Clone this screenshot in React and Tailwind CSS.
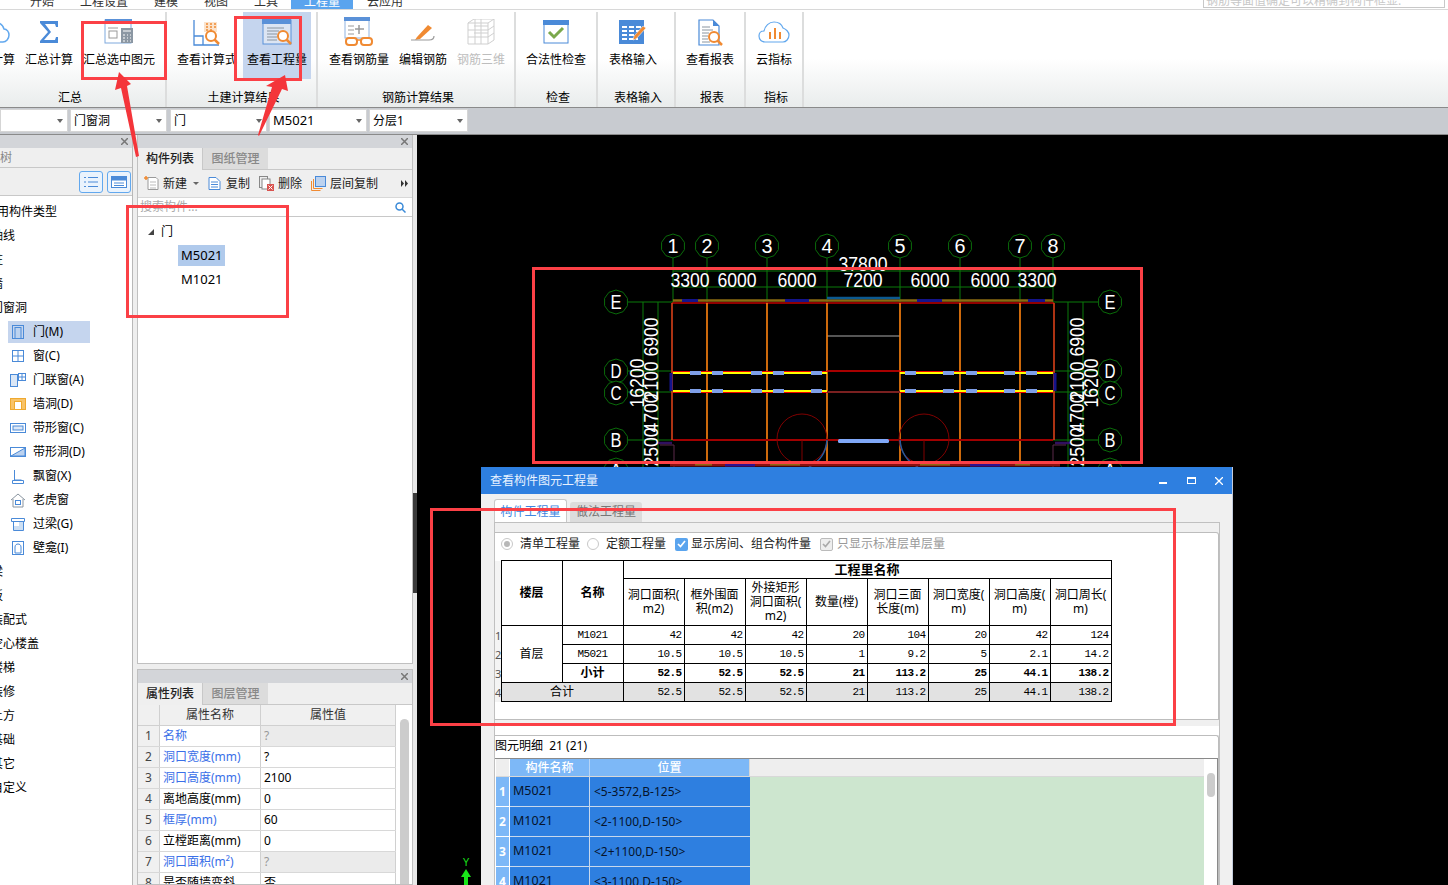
import React from "react";

const mono = "[font-family:'Liberation_Mono','Noto_Sans_CJK_SC',monospace]";

/* ---------- ribbon icons ---------- */
const B = "#4a8ad8";
const O = "#f08a32";
const Lens = ({ x, y, r = 5, c = O, w = 2 }) => (
  <g fill="none" stroke={c} strokeWidth={w}>
    <circle cx={x} cy={y} r={r} fill="#fff" />
    <path d={`M${x + r * 0.7} ${y + r * 0.7}l${r * 0.9} ${r * 0.9}`} strokeWidth={w + 0.5} />
  </g>
);
const IconCloudCalc = () => (
  <svg width="28" height="24" viewBox="0 0 28 24" fill="none" className="-ml-[14px]">
    <path d="M7 22c-4 0-6-3-6-6s2-5 5-6c1-5 5-8 9-7 4 0 6 3 7 6 3 0 5 3 5 6 0 4-3 7-6 7z" stroke="#62a8ee" strokeWidth="1.5" />
    <path d="M12 10h-5v7h5" stroke={O} strokeWidth="1.5" />
  </svg>
);
const IconSigma = () => (
  <svg width="20" height="22" viewBox="0 0 20 22"><path d="M1 0h18v6h-2l-1-3H6l6 8-7 8h11l1-3h2v6H1v-2l8-9-8-9z" fill={B} /></svg>
);
const IconSelCalc = () => (
  <svg width="30" height="26" viewBox="0 0 30 26" fill="none">
    <rect x="1" y="1" width="26" height="23" stroke="#7fa9dd" fill="#fff" />
    <rect x="1" y="0" width="27" height="4" fill="#5a91d8" />
    <rect x="5" y="12" width="8" height="7" stroke="#9a9a9a" />
    <path d="M4 9h10" stroke="#9a9a9a" />
    <rect x="17" y="9" width="12" height="15" fill="#8b97a3" />
    <path d="M19 12h8M19 16h2m2 0h1m2 0h1M19 19h2m2 0h1m2 0h1M19 22h2m2 0h1m2 0h1" stroke="#fff" />
  </svg>
);
const IconCalcView = () => (
  <svg width="28" height="27" viewBox="0 0 28 27" fill="none">
    <path d="M1 1v25h25" stroke={B} strokeWidth="1.3" />
    <path d="M1 17h9v9" stroke={B} strokeWidth="1.3" />
    <rect x="11" y="3" width="13" height="10" fill="#fbe3cc" />
    <path d="M13 5h2m2 0h2m2 0h2M13 8h2m2 0h2m2 0h2M13 11h2m2 0h2" stroke={O} strokeWidth="1.4" />
    <Lens x={18} y={17} r={5} />
  </svg>
);
const IconQty = () => (
  <svg width="30" height="27" viewBox="0 0 30 27" fill="none">
    <rect x="1" y="1" width="28" height="24" fill="#dce5f3" stroke="#5a91d8" />
    <rect x="0" y="0" width="29" height="5" fill="#5a91d8" />
    <path d="M5 9h17M5 12h12M5 15h10M5 18h10M5 21h10" stroke="#8a95a0" />
    <Lens x={21} y={17} r={5} />
  </svg>
);
const IconRebar = () => (
  <svg width="30" height="30" viewBox="0 0 30 30" fill="none">
    <rect x="1" y="1" width="24" height="20" fill="#fff" stroke="#8fb4e2" />
    <rect x="0" y="0" width="26" height="4" fill="#5a91d8" />
    <path d="M4 9h6M4 13h6M4 17h6" stroke="#9a9a9a" />
    <path d="M15 8v9M11 12h9" stroke="#9a9a9a" strokeWidth="1.5" />
    <rect x="2" y="21" width="11" height="7" rx="3" stroke={O} strokeWidth="2" fill="#fff" />
    <rect x="17" y="21" width="11" height="7" rx="3" stroke={O} strokeWidth="2" fill="#fff" />
    <path d="M13 23h4" stroke={O} strokeWidth="1.5" />
  </svg>
);
const IconEdit = () => (
  <svg width="28" height="20" viewBox="0 0 28 20" fill="none">
    <path d="M8 15L19 3l4 3-12 11-5 1z" fill={O} />
    <path d="M2 18h18c4 0 5-2 5-4" stroke="#9a9a9a" strokeWidth="1.2" />
  </svg>
);
const IconGrid3d = () => (
  <svg width="28" height="26" viewBox="0 0 28 26" fill="none" stroke="#cfcfcf">
    <path d="M1 4h20v21H1zM7 0h20v21M1 4l6-4M21 4l6-4M21 25l6-4M1 11h20l6-4M1 18h20l6-4M8 0v25M14 0v25M7 7h14M7 14h14" />
  </svg>
);
const IconCheck = () => (
  <svg width="26" height="24" viewBox="0 0 26 24" fill="none">
    <rect x="1" y="1" width="24" height="22" fill="#fff" stroke={B} />
    <rect x="0" y="0" width="26" height="5" fill={B} />
    <path d="M6 12l5 5 9-9" stroke="#7aa84c" strokeWidth="3" />
  </svg>
);
const IconTable = () => (
  <svg width="29" height="24" viewBox="0 0 29 24" fill="none">
    <rect x="0" y="0" width="25" height="24" fill={B} />
    <path d="M3 7h5m2 0h5m2 0h5M3 11h5m2 0h5m2 0h5M3 15h5m2 0h5m2 0h3M3 19h5m2 0h5m2 0h2" stroke="#fff" strokeWidth="2" />
    <path d="M17 19l10-11-3-2-9 10-1 4z" fill={O} stroke="#fff" strokeWidth="0.5" />
  </svg>
);
const IconReport = () => (
  <svg width="25" height="27" viewBox="0 0 25 27" fill="none">
    <path d="M1 1h14l6 6v19H1z" fill="#fff" stroke={B} strokeWidth="1.2" />
    <path d="M15 1v6h6z" fill={B} />
    <path d="M4 8h8M4 11h11M4 14h7M4 17h6M4 20h6M4 23h8" stroke="#8a95a0" />
    <Lens x={16} y={18} r={5} />
  </svg>
);
const IconCloudIdx = () => (
  <svg width="32" height="22" viewBox="0 0 32 22" fill="none">
    <path d="M7 21c-3 0-6-2-6-6 0-3 2-5 5-5 1-5 5-9 10-9s8 3 9 6c3 1 6 4 6 7 0 4-3 7-6 7z" stroke="#62a8ee" strokeWidth="1.2" fill="#fff" />
    <path d="M12 11v7M17 7v11M22 11v7" stroke={O} strokeWidth="2" />
  </svg>
);

/* ---------- tree icons ---------- */
const TI = ({ children }) => (
  <svg width="16" height="16" viewBox="0 0 16 16" fill="none" stroke="#4a8ad8" className="shrink-0">{children}</svg>
);
const treeIcons = {
  door: <TI><rect x="2.5" y="1.5" width="11" height="13" /><rect x="5" y="3.5" width="6" height="11" fill="#bcd2ef" /></TI>,
  win: <TI><rect x="2.5" y="2.5" width="11" height="11" /><path d="M8 3v10M3 8h10" /></TI>,
  combo: <TI><rect x="0.5" y="2.5" width="7" height="12" fill="#dbe7f6" /><rect x="8.5" y="1.5" width="7" height="7" /><path d="M12 2v6M9 5h6" /></TI>,
  hole: <TI><rect x="0.5" y="2.5" width="15" height="11" fill="#f8c368" stroke="#efa92f" /><rect x="4.5" y="5.5" width="7" height="8" fill="#fff" stroke="#efa92f" /></TI>,
  band: <TI><rect x="0.5" y="3.5" width="15" height="9" /><rect x="3" y="6" width="10" height="4" fill="#dbe7f6" /></TI>,
  bandh: <TI><rect x="0.5" y="3.5" width="15" height="9" /><path d="M1 12l14-8v8z" fill="#bcd2ef" /></TI>,
  bay: <TI><path d="M4.5 2v10.5M2.5 12.5h11v3h-11zM4.5 12h7" /></TI>,
  dorm: <TI><path d="M1 8l7-6 7 6M3 7v8h10V7" stroke="#8a95a0" /><rect x="5.5" y="8.5" width="5" height="4" /></TI>,
  lintel: <TI><path d="M1.5 2.5h13v3h-13zM3.5 6v8.5h10V6" /><path d="M4 14V10h5V6h4v8z" fill="#cddff3" stroke="none" /></TI>,
  niche: <TI><rect x="2.5" y="1.5" width="11" height="13" /><path d="M5 13V7c0-4 6-4 6 0v6z" /></TI>,
};

const TopRow = ({ children, wide }) => (
  <div className={`h-6 flex items-center text-[12px] text-black whitespace-nowrap ${wide ? "-ml-[15px]" : "-ml-[9px]"}`}>{children}</div>
);
const SubRow = ({ icon, label, active }) => (
  <div className={`flex items-center ml-2 w-[82px] pl-[2px] gap-[7px] text-[12px] text-black whitespace-nowrap ${active ? "bg-[#c5d5ee] h-[22px] my-px" : "h-6"}`}>
    {treeIcons[icon]}
    <span>{label}</span>
  </div>
);

const Btn = ({ icon, label, className = "", active, disabled }) => (
  <div className={`flex flex-col items-center h-[67px] pt-[3px] ${active ? "bg-[#c5d5ee]" : ""} ${className}`}>
    <div className="h-[34px] flex items-center justify-center">{icon}</div>
    <div className={`mt-[2px] h-[18px] leading-[18px] text-[12px] whitespace-nowrap ${disabled ? "text-[#bdbdbd]" : "text-black"}`}>{label}</div>
  </div>
);

const Group = ({ label, className = "", children }) => (
  <div className={`mt-[2px] h-[95px] flex flex-col border-r-2 border-[#dcdddd] shrink-0 relative ${className}`}>
    <div className="flex h-[77px]">{children}</div>
    <div className="h-[18px] leading-[18px] text-center text-[12px] text-black pl-[4px]">{label}</div>
  </div>
);

const Select = ({ className = "", children }) => (
  <div className={`h-[23px] bg-white border border-[#d5d5d5] flex items-center justify-between pl-[3px] pr-[4px] text-[12px] text-black shrink-0 ${className}`}>
    <span className="leading-none">{children}</span>
    <span className="w-0 h-0 border-l-[3px] border-r-[3px] border-t-[4px] border-l-transparent border-r-transparent border-t-[#666]" />
  </div>
);

const PanelTitle = () => (
  <div className="h-[13px] bg-[#d3d5d9] flex items-center justify-end pr-[4px]">
    <svg width="7" height="7" viewBox="0 0 7 7" stroke="#777" strokeWidth="1.5"><path d="M0 0l7 7M7 0L0 7" /></svg>
  </div>
);

const Tabs2 = ({ a, b }) => (
  <div className="h-[22px] bg-[#efefef] border-b border-[#c8c8c8] flex text-[12px] font-medium">
    <div className="w-[65px] h-[22px] flex items-center justify-center text-[#222] border-r border-[#c8c8c8] bg-[#efefef]">{a}</div>
    <div className="w-[65px] h-[21px] flex items-center justify-center text-[#888] bg-[#dcdcdc]">{b}</div>
  </div>
);

const props = [
  ["名称", "?", 1, 1],
  ["洞口宽度(mm)", "?", 1, 0],
  ["洞口高度(mm)", "2100", 1, 0],
  ["离地高度(mm)", "0", 0, 0],
  ["框厚(mm)", "60", 1, 0],
  ["立樘距离(mm)", "0", 0, 0],
  ["洞口面积(m²)", "?", 1, 1],
  ["是否随墙变斜", "否", 0, 0],
];

const headers = [
  <>洞口面积(<br />m2)</>,
  <>框外围面<br />积(m2)</>,
  <>外接矩形<br />洞口面积(<br />m2)</>,
  <>数量(樘)</>,
  <>洞口三面<br />长度(m)</>,
  <>洞口宽度(<br />m)</>,
  <>洞口高度(<br />m)</>,
  <>洞口周长(<br />m)</>,
];
const r1 = ["42", "42", "42", "20", "104", "20", "42", "124"];
const r2 = ["10.5", "10.5", "10.5", "1", "9.2", "5", "2.1", "14.2"];
const r3 = ["52.5", "52.5", "52.5", "21", "113.2", "25", "44.1", "138.2"];

const Num = ({ v, bold, gray }) => (
  <td className={`border border-black text-right pr-[2px] text-[11px] tracking-[-0.6px] ${mono} ${bold ? "font-bold" : ""} ${gray ? "bg-[#e2e2e2]" : ""}`}>{v}</td>
);
const Gut = ({ n }) => (
  <td className="w-[6px] p-0 text-[11px] text-[#555] overflow-hidden bg-[#f4f4f4] leading-none">{n}</td>
);

const details = [
  ["M5021", "<5-3572,B-125>"],
  ["M1021", "<2-1100,D-150>"],
  ["M1021", "<2+1100,D-150>"],
  ["M1021", "<3-1100,D-150>"],
];

/* ---------- CAD drawing (page coordinates) ---------- */
const Bubble = ({ x, y, t }) => {
  const pts = Array.from({ length: 10 }, (_, i) => {
    const a = (Math.PI * 2 * i) / 10 + Math.PI / 10;
    return `${x + 12 * Math.cos(a)},${y + 12 * Math.sin(a)}`;
  }).join(" ");
  return (
    <g>
      <polygon points={pts} fill="#000" stroke="#0a6b0a" strokeWidth="1" />
      <text x={x} y={y + 7} textAnchor="middle" fontSize="20" fill="#fff" fontFamily="Liberation Sans" textLength={11} lengthAdjust="spacingAndGlyphs">{t}</text>
    </g>
  );
};
const DimT = ({ x, y, t }) => (
  <text x={x} y={y} textAnchor="middle" fontSize="20" fill="#fff" fontFamily="Liberation Sans" textLength={t.length * 9.8} lengthAdjust="spacingAndGlyphs">{t}</text>
);
const DimV = ({ x, y, t }) => (
  <text x={x} y={y} textAnchor="middle" fontSize="20" fill="#fff" fontFamily="Liberation Sans" textLength={t.length * 9.8} lengthAdjust="spacingAndGlyphs" transform={`rotate(-90 ${x} ${y})`}>{t}</text>
);

const colsX = [673, 707, 767, 827, 900, 960, 1020, 1053];
const wins = [690, 712, 751, 773, 811, 905, 943, 966, 1004, 1026];

const Cad = () => (
  <svg className="absolute inset-0 w-full h-full" viewBox="417 135 1031 750">
    {colsX.map((x) => <path key={x} d={`M${x} 258V303`} stroke="#0a7a0a" />)}
    <path d="M673 271H1053M673 287H1053" stroke="#0a7a0a" />
    <path d="M643 302V470M658 302V470M1068 302V470M1083 302V470" stroke="#0a7a0a" />
    <path d="M628 302H673M628 371H673M628 392H673M628 440H673M1053 302H1098M1053 371H1098M1053 392H1098M1053 440H1098" stroke="#0a7a0a" />
    <path d="M673 300.5H1053" stroke="#8a6a10" strokeWidth="2.5" />
    <path d="M682 300.5H698M785 300.5H809M917 300.5H942M1028 300.5H1045" stroke="#14148c" strokeWidth="3" />
    <path d="M827 298H900" stroke="#0c5a90" strokeWidth="2.5" />
    <path d="M672 303H1054" stroke="#c00000" strokeWidth="1.5" />
    <path d="M827 336H900" stroke="#555" strokeWidth="2" />
    <path d="M707 303V465M767 303V465M827 303V465M900 303V465M960 303V465M1020 303V465" stroke="#ff8410" strokeWidth="1.6" />
    <path d="M672 303V440M1054 303V440" stroke="#d84018" strokeWidth="1.6" />
    <path d="M671 373V391M1055 373V391" stroke="#14148c" strokeWidth="3" />
    <path d="M673 373H827M900 373H1053M673 391H827M900 391H1053" stroke="#ffff00" strokeWidth="2" />
    <path d="M673 371.5H827M900 371.5H1053M673 392.5H827M900 392.5H1053" stroke="#f00000" strokeWidth="1" />
    <path d="M827 371H900" stroke="#e00000" strokeWidth="1.5" />
    <path d="M827 392H900" stroke="#7a2020" strokeWidth="2" />
    {wins.map((x) => (
      <g key={x}>
        <rect x={x} y="371" width="11" height="4" fill="#7f9fe8" />
        <rect x={x} y="389" width="11" height="4" fill="#7f9fe8" />
      </g>
    ))}
    <path d="M673 440H1053" stroke="#a00000" strokeWidth="2" />
    <rect x="838" y="439" width="51" height="4" rx="1.5" fill="#80a8f8" />
    <ellipse cx="802" cy="439" rx="25" ry="25" fill="none" stroke="#800000" />
    <ellipse cx="924" cy="439" rx="25" ry="25" fill="none" stroke="#800000" />
    <path d="M802 440V465M924 440V465" stroke="#800000" />
    <path d="M827 440c-1 14-8 22-18 27M900 440c1 14 8 22 18 27" stroke="#2a5a9a" strokeWidth="1.5" fill="none" />
    <path d="M656 443H672M1055 443H1071" stroke="#301060" strokeWidth="2.5" />
    <path d="M660 445H674V468M1066 445H1053V468" stroke="#5a2a4a" fill="none" />
    <path d="M670 465H1060" stroke="#8a1010" strokeWidth="3" />
    <path d="M695 464H712M770 464H800M920 464H950M1015 464H1030" stroke="#8a6a10" strokeWidth="3" />
    <path d="M725 465H755M970 465H1000" stroke="#301090" strokeWidth="3" />
    <DimT x={863} y={271} t="37800" />
    <DimT x={690} y={287} t="3300" />
    <DimT x={737} y={287} t="6000" />
    <DimT x={797} y={287} t="6000" />
    <DimT x={863} y={287} t="7200" />
    <DimT x={930} y={287} t="6000" />
    <DimT x={990} y={287} t="6000" />
    <DimT x={1037} y={287} t="3300" />
    <DimV x={658} y={337} t="6900" />
    <DimV x={658} y={381} t="2100" />
    <DimV x={658} y={413} t="4700" />
    <DimV x={658} y={447} t="2500" />
    <DimV x={644} y={383} t="16200" />
    <DimV x={1084} y={337} t="6900" />
    <DimV x={1084} y={381} t="2100" />
    <DimV x={1084} y={413} t="4700" />
    <DimV x={1084} y={447} t="2500" />
    <DimV x={1098} y={383} t="16200" />
    {colsX.map((x, i) => <Bubble key={x} x={x} y={246} t={String(i + 1)} />)}
    {[["E", 302], ["D", 371], ["C", 393], ["B", 440], ["A", 470]].map(([t, y]) => (
      <g key={t}>
        <Bubble x={616} y={y} t={t} />
        <Bubble x={1110} y={y} t={t} />
      </g>
    ))}
    <text x="466" y="866" textAnchor="middle" fontSize="10" fill="#19e619" fontFamily="Liberation Sans">Y</text>
    <path d="M466 869l5 8h-3v8h-4v-8h-3z" fill="#19e619" />
  </svg>
);

export default function App() {
  return (
    <div className="relative w-[1448px] h-[885px] overflow-hidden bg-[#f0f0f0] flex flex-col [font-family:'Noto_Sans','Noto_Sans_CJK_SC',sans-serif]">
      {/* menu tabs */}
      <div className="h-[10px] shrink-0 bg-white border-b border-[#d8d8d8] relative overflow-hidden text-[12px] text-[#333]">
        <div className="flex -mt-[4px] h-[14px] leading-[12px] pl-[24px] items-start">
          {[
            ["开始", "w-[50px]"],
            ["工程设置", "w-[74px]"],
            ["建模", "w-[50px]"],
            ["视图", "w-[50px]"],
            ["工具", "w-[43px]"],
          ].map(([t, w]) => (
            <div key={t} className={`${w} pl-[6px] whitespace-nowrap`}>{t}</div>
          ))}
          <div className="w-[62px] h-[14px] bg-[#5aa4ee] text-white text-center ml-0">工程量</div>
          <div className="pl-[14px] whitespace-nowrap">云应用</div>
        </div>
        <div className="absolute left-[1203px] top-0 w-[242px] h-[8px] border-b border-l border-r border-[#c8c8c8] overflow-hidden text-[12px] text-[#c8c8c8] leading-[2px] pl-[2px] whitespace-nowrap">
          钢筋等面值确定可以精确到构件框显:
        </div>
      </div>

      {/* ribbon */}
      <div className="h-[98px] shrink-0 flex border-b border-[#8a8a8a] bg-[linear-gradient(to_bottom,#ffffff_50%,#e9ecec_100%)]">
        <Group label="汇总" className="-ml-[29px] w-[196px]">
          <div className="w-[15px]" />
          <Btn icon={<IconCloudCalc />} label="计算" className="w-[34px]" />
          <Btn icon={<IconSigma />} label="汇总计算" className="w-[58px]" />
          <Btn icon={<IconSelCalc />} label="汇总选中图元" className="w-[82px]" />
        </Group>
        <Group label="土建计算结果" className="w-[151px]">
          <div className="w-[5px]" />
          <Btn icon={<IconCalcView />} label="查看计算式" className="w-[70px]" />
          <div className="w-[1px]" />
          <Btn icon={<IconQty />} label="查看工程量" className="w-[68px]" active />
        </Group>
        <Group label="钢筋计算结果" className="w-[198px]">
          <div className="w-[6px]" />
          <Btn icon={<IconRebar />} label="查看钢筋量" className="w-[70px]" />
          <Btn icon={<IconEdit />} label="编辑钢筋" className="w-[58px]" />
          <Btn icon={<IconGrid3d />} label="钢筋三维" className="w-[58px]" disabled />
        </Group>
        <Group label="检查" className="w-[82px]">
          <Btn icon={<IconCheck />} label="合法性检查" className="w-full" />
        </Group>
        <Group label="表格输入" className="w-[78px]">
          <div className="w-[6px]" />
          <Btn icon={<IconTable />} label="表格输入" className="w-[58px]" />
        </Group>
        <Group label="报表" className="w-[70px]">
          <Btn icon={<IconReport />} label="查看报表" className="w-full" />
        </Group>
        <Group label="指标" className="w-[58px]">
          <Btn icon={<IconCloudIdx />} label="云指标" className="w-full" />
        </Group>
      </div>

      {/* selector bar */}
      <div className="h-[27px] shrink-0 bg-[#c8cbd0] border-b border-[#8a8a8a] flex items-center gap-[2px] pb-[1px]">
        <Select className="w-[68px]" />
        <Select className="w-[97px]">门窗洞</Select>
        <Select className="w-[97px] ml-[1px]">门</Select>
        <Select className="w-[98px]"><span className="text-[13px]">M5021</span></Select>
        <Select className="w-[99px]">分层1</Select>
      </div>

      {/* workspace */}
      <div className="flex-1 flex min-h-0">
        {/* tree panel */}
        <div className="w-[133px] shrink-0 bg-white border-r border-[#b8b8b8] flex flex-col overflow-hidden">
          <PanelTitle />
          <div className="h-[20px] bg-[#efefef] border-b border-[#c8c8c8] text-[12px] text-[#888] leading-[20px] -ml-[24px] pl-0 whitespace-nowrap w-[160px]">导航树</div>
          <div className="h-[28px] bg-[#efefef] border-b border-[#c8c8c8] flex justify-end items-center gap-[4px] pr-[1px]">
            <div className="w-[24px] h-[22px] rounded-[3px] border border-[#62a8ee] bg-[#eaf3fd] flex items-center justify-center">
              <svg width="14" height="12" viewBox="0 0 14 12" fill="none" stroke="#4a8ad8"><path d="M0 1.5h2M4 1.5h10M0 6h2M4 6h10M0 10.5h2M4 10.5h10" /></svg>
            </div>
            <div className="w-[24px] h-[22px] rounded-[3px] border border-[#62a8ee] bg-[#eaf3fd] flex items-center justify-center">
              <svg width="16" height="12" viewBox="0 0 16 12" fill="none" stroke="#4a8ad8"><rect x="0.5" y="0.5" width="15" height="11" fill="#fff" /><rect x="0" y="0" width="16" height="4" fill="#4a8ad8" /><path d="M3 7h10M3 9.5h10" /></svg>
            </div>
          </div>
          <div className="pt-[4px]">
            <TopRow wide>常用构件类型</TopRow>
            <TopRow>轴线</TopRow>
            <TopRow>柱</TopRow>
            <TopRow>墙</TopRow>
            <TopRow>门窗洞</TopRow>
            <SubRow icon="door" label="门(M)" active />
            <SubRow icon="win" label="窗(C)" />
            <SubRow icon="combo" label="门联窗(A)" />
            <SubRow icon="hole" label="墙洞(D)" />
            <SubRow icon="band" label="带形窗(C)" />
            <SubRow icon="bandh" label="带形洞(D)" />
            <SubRow icon="bay" label="飘窗(X)" />
            <SubRow icon="dorm" label="老虎窗" />
            <SubRow icon="lintel" label="过梁(G)" />
            <SubRow icon="niche" label="壁龛(I)" />
            <TopRow>梁</TopRow>
            <TopRow>板</TopRow>
            <TopRow>装配式</TopRow>
            <TopRow>空心楼盖</TopRow>
            <TopRow>楼梯</TopRow>
            <TopRow>装修</TopRow>
            <TopRow>土方</TopRow>
            <TopRow>基础</TopRow>
            <TopRow>其它</TopRow>
            <TopRow>自定义</TopRow>
          </div>
        </div>

        <div className="w-[4px] shrink-0 bg-[#eeeeee]" />

        {/* middle column */}
        <div className="w-[276px] shrink-0 flex flex-col">
          <div className="h-[529px] shrink-0 bg-white border border-t-0 border-[#c0c0c0] flex flex-col">
            <PanelTitle />
            <Tabs2 a="构件列表" b="图纸管理" />
            <div className="h-[28px] bg-[#efefef] border-b border-[#d8d8d8] flex items-center pl-[6px] text-[12px] text-[#222] whitespace-nowrap relative">
              <svg width="15" height="15" viewBox="0 0 15 15" fill="none"><path d="M4 1.5h8l2 2v10H4z" fill="#fff" stroke="#9a9a9a" /><path d="M6 6h6M6 9h6M6 12h6" stroke="#bbb" /><path d="M0 2h4M2 0v4" stroke="#f08a32" strokeWidth="1.5" /></svg>
              <span className="ml-[4px]">新建</span>
              <span className="ml-[6px] w-0 h-0 border-l-[3px] border-r-[3px] border-t-[3px] border-l-transparent border-r-transparent border-t-[#666]" />
              <svg className="ml-[9px]" width="13" height="15" viewBox="0 0 13 15" fill="none" stroke="#4a8ad8"><path d="M1 1.5h7l4 4v8H1z" fill="#fff" /><path d="M3 6h7M3 8.5h7M3 11h7" /></svg>
              <span className="ml-[5px]">复制</span>
              <svg className="ml-[9px]" width="15" height="15" viewBox="0 0 15 15" fill="none"><rect x="0.5" y="0.5" width="8" height="11" stroke="#888" /><rect x="3" y="3" width="8" height="10" stroke="#888" fill="#fff" /><rect x="8" y="8" width="7" height="7" fill="#d9534f" /><path d="M9.5 9.5l4 4m0-4l-4 4" stroke="#fff" /></svg>
              <span className="ml-[4px]">删除</span>
              <svg className="ml-[9px]" width="15" height="15" viewBox="0 0 15 15" fill="none"><path d="M0.5 5v9.5h9" stroke="#f08a32" /><path d="M2.5 3v9.5h9" stroke="#f08a32" /><rect x="4.5" y="0.5" width="10" height="10" fill="#bcd2ef" stroke="#4a8ad8" /></svg>
              <span className="ml-[4px]">层间复制</span>
              <svg className="ml-auto mr-[4px]" width="7" height="7" viewBox="0 0 7 7" fill="#333"><path d="M0 0l3 3.5L0 7zM4 0l3 3.5L4 7z" /></svg>
            </div>
            <div className="h-[19px] border-b border-[#c8c8c8] flex items-center justify-between pl-[2px] pr-[6px] text-[12px] text-[#aaa]">
              <span>搜索构件...</span>
              <svg width="11" height="11" viewBox="0 0 11 11" fill="none" stroke="#3a8ad8" strokeWidth="1.5"><circle cx="4.5" cy="4.5" r="3.5" /><path d="M7 7l3.5 3.5" /></svg>
            </div>
            <div className="flex items-center h-[24px] mt-[3px] pl-[10px] text-[12px] text-black">
              <svg width="6" height="6" viewBox="0 0 6 6"><path d="M6 0v6H0z" fill="#444" /></svg>
              <span className="ml-[7px]">门</span>
            </div>
            <div className="pl-[40px] text-[13px] text-black">
              <div className="w-[47px] h-[21px] mt-[1px] bg-[#b0caec] flex items-center pl-[3px]">M5021</div>
              <div className="h-[21px] mt-[3px] flex items-center pl-[3px]">M1021</div>
            </div>
          </div>
          <div className="h-[5px] shrink-0 bg-[#eeeeee]" />
          <div className="flex-1 min-h-0 bg-white border border-[#c0c0c0] flex flex-col overflow-hidden">
            <PanelTitle />
            <Tabs2 a="属性列表" b="图层管理" />
            <div className="flex-1 flex min-h-0">
              <div className="w-[258px] shrink-0 text-[12px]">
                <div className="flex h-[21px] bg-[#f0f0f0] border-b border-[#d0d0d0] text-[#333]">
                  <div className="w-[22px] border-r border-[#d0d0d0]" />
                  <div className="w-[101px] border-r border-[#d0d0d0] flex items-center justify-center">属性名称</div>
                  <div className="flex-1 border-r border-[#d0d0d0] flex items-center justify-center">属性值</div>
                </div>
                {props.map(([n, v, blue, gray], i) => (
                  <div key={i} className="flex h-[21px] border-b border-[#d8d8d8]">
                    <div className="w-[22px] bg-[#f0f0f0] border-r border-[#d0d0d0] flex items-center justify-center text-[#444]">{i + 1}</div>
                    <div className={`w-[101px] border-r border-[#d0d0d0] flex items-center pl-[3px] whitespace-nowrap ${blue ? "text-[#3a6fe8]" : "text-black"}`}>{n}</div>
                    <div className={`flex-1 border-r border-[#d0d0d0] flex items-center pl-[3px] ${gray ? "bg-[#ebebeb] text-[#999]" : "text-black"}`}>{v}</div>
                  </div>
                ))}
              </div>
              <div className="flex-1 relative">
                <div className="absolute left-[4px] top-[14px] bottom-0 w-[9px] rounded-t-[5px] bg-[#cccccc]" />
              </div>
            </div>
          </div>
        </div>

        <div className="w-[4px] shrink-0 bg-[#e8e8e8] flex items-start">
          <div className="w-[4px] h-[100px] mt-[358px] bg-[#3a3a3a]" />
        </div>

        {/* canvas */}
        <div className="flex-1 bg-black relative min-w-0">
          <Cad />
        </div>
      </div>

      {/* floating dialog */}
      <div className="absolute left-[481px] top-[467px] w-[752px] h-[418px] bg-[#f0f0f0] border-r border-[#c4ccdc] flex flex-col overflow-hidden">
        <div className="h-[27px] shrink-0 bg-[#2e7fe0] flex items-center pl-[9px] text-[12px] text-[#e8f2ff]">
          <span>查看构件图元工程量</span>
          <div className="ml-auto flex items-center">
            <div className="w-[8px] h-[2px] bg-white mt-[4px]" />
            <div className="w-[9px] h-[7px] border border-white border-t-2 ml-[20px]" />
            <svg className="ml-[19px] mr-[9px]" width="8" height="8" viewBox="0 0 8 8" stroke="#fff" strokeWidth="1.3"><path d="M0 0l8 8M8 0L0 8" /></svg>
          </div>
        </div>
        <div className="pl-[13px] pr-[12px] flex-1 flex flex-col min-h-0">
          <div className="flex h-[28px] pt-[5px] items-end shrink-0 text-[12px]">
            <div className="w-[73px] h-[23px] pt-[1px] bg-white border border-b-0 border-[#c8c8c8] rounded-t-[3px] flex items-center justify-center text-[#3d86e0]">构件工程量</div>
            <div className="w-[72px] h-[20px] ml-[3px] bg-[#dcdcdc] rounded-t-[3px] flex items-center justify-center text-[#777]">做法工程量</div>
          </div>
          <div className="flex-1 border-t border-l border-r border-[#c0c0c0] pt-[9px] flex flex-col min-h-0">
            <div className="h-[188px] shrink-0 bg-white border-t border-r border-b border-[#bdbdbd] rounded-tr-[3px]">
              <div className="h-[27px] pb-[5px] flex items-center pl-[6px] text-[12px] text-[#222] whitespace-nowrap">
                <span className="w-[12px] h-[12px] rounded-full border border-[#c8c8c8] flex items-center justify-center"><span className="w-[6px] h-[6px] rounded-full bg-[#b8b8b8]" /></span>
                <span className="ml-[7px]">清单工程量</span>
                <span className="ml-[7px] w-[12px] h-[12px] rounded-full border border-[#c8c8c8]" />
                <span className="ml-[7px]">定额工程量</span>
                <span className="ml-[9px] w-[13px] h-[13px] rounded-[2px] bg-[#5aa4ee] flex items-center justify-center">
                  <svg width="9" height="8" viewBox="0 0 9 8" fill="none" stroke="#fff" strokeWidth="1.7"><path d="M1 4l2.5 2.5L8 1" /></svg>
                </span>
                <span className="ml-[3px]">显示房间、组合构件量</span>
                <span className="ml-[9px] w-[13px] h-[13px] rounded-[2px] border border-[#bbb] bg-[#eee] flex items-center justify-center">
                  <svg width="9" height="8" viewBox="0 0 9 8" fill="none" stroke="#aaa" strokeWidth="1.7"><path d="M1 4l2.5 2.5L8 1" /></svg>
                </span>
                <span className="ml-[4px] text-[#999]">只显示标准层单层量</span>
              </div>
              <table className="table-fixed border-collapse w-[616px] text-[12px] text-black leading-[14px]">
                <colgroup>
                  <col className="w-[6px]" />
                  {Array.from({ length: 10 }, (_, i) => <col key={i} className="w-[61px]" />)}
                </colgroup>
                <tbody>
                  <tr className="h-[18px]">
                    <Gut />
                    <td rowSpan={2} className="border border-black text-center font-bold">楼层</td>
                    <td rowSpan={2} className="border border-black text-center font-bold">名称</td>
                    <td colSpan={8} className="border border-black text-center font-bold text-[13px] leading-[13px]">工程里名称</td>
                  </tr>
                  <tr className="h-[47px]">
                    <Gut />
                    {headers.map((h, i) => (
                      <td key={i} className="border border-black text-center p-0 whitespace-nowrap">{h}</td>
                    ))}
                  </tr>
                  <tr className="h-[19px]">
                    <Gut n="1" />
                    <td rowSpan={3} className="border border-black text-center">首层</td>
                    <td className={`border border-black text-center text-[11px] tracking-[-0.6px] ${mono}`}>M1021</td>
                    {r1.map((v, i) => <Num key={i} v={v} />)}
                  </tr>
                  <tr className="h-[19px]">
                    <Gut n="2" />
                    <td className={`border border-black text-center text-[11px] tracking-[-0.6px] ${mono}`}>M5021</td>
                    {r2.map((v, i) => <Num key={i} v={v} />)}
                  </tr>
                  <tr className="h-[19px]">
                    <Gut n="3" />
                    <td className="border border-black text-center font-bold">小计</td>
                    {r3.map((v, i) => <Num key={i} v={v} bold />)}
                  </tr>
                  <tr className="h-[19px]">
                    <Gut n="4" />
                    <td colSpan={2} className="border border-black text-center bg-[#e2e2e2]">合计</td>
                    {r3.map((v, i) => <Num key={i} v={v} gray />)}
                  </tr>
                </tbody>
              </table>
            </div>
            <div className="h-[6px] shrink-0" />
            <div className="h-[9px] shrink-0 bg-white" />
            <div className="flex-1 min-h-0 bg-white border-t border-r border-[#bdbdbd] rounded-tr-[3px] flex flex-col overflow-hidden">
              <div className="h-[23px] pb-[2px] shrink-0 flex items-center text-[12px] text-black whitespace-pre border-b border-[#8a8a8a]">图元明细  21 (21)</div>
              <div className="flex flex-1 min-h-0 pl-px">
                <div className="w-[708px] shrink-0 flex flex-col">
                  <div className="flex h-[18px] shrink-0 text-[12px] font-medium text-white border-b border-[#d8d8d8]">
                    <div className="w-[14px] bg-[#eeeeee] border-r border-white" />
                    <div className="w-[80px] bg-[#7db8f7] border-r border-[#b8d4f4] flex items-center justify-center">构件名称</div>
                    <div className="w-[160px] bg-[#7db8f7] border-r border-[#d8d8d8] flex items-center justify-center">位置</div>
                    <div className="flex-1 bg-[#eeeeee]" />
                  </div>
                  {details.map(([a, b], i) => (
                    <div key={i} className="flex h-[30px] shrink-0">
                      <div className="w-[14px] bg-[#7db8f7] border-r border-b border-white flex items-center justify-center text-[12px] font-bold text-white">{i + 1}</div>
                      <div className="w-[80px] bg-[#2e7fe0] border-r border-b border-[#c8d8ec] flex items-center pl-[3px] text-[12.5px] text-[#06142c]">{a}</div>
                      <div className="w-[160px] bg-[#2e7fe0] border-b border-[#c8d8ec] flex items-center pl-[4px] text-[12px] text-[#06142c]">{b}</div>
                      <div className="flex-1 bg-[#cde6cf]" />
                    </div>
                  ))}
                </div>
                <div className="flex-1 bg-white relative border-r border-[#8a8a8a]">
                  <div className="absolute left-[3px] top-[14px] w-[8px] h-[24px] rounded-[4px] bg-[#cccccc]" />
                </div>
              </div>
            </div>
          </div>
        </div>
      </div>

      {/* red annotations */}
      <div className="absolute left-[81px] top-[21px] w-[86px] h-[59px] border-[3px] border-[#fb4046]" />
      <div className="absolute left-[234px] top-[16px] w-[68px] h-[65px] border-[3px] border-[#fb4046]" />
      <div className="absolute left-[126px] top-[205px] w-[163px] h-[113px] border-[3px] border-[#fb4046]" />
      <div className="absolute left-[532px] top-[267px] w-[611px] h-[197px] border-[3px] border-[#fb4046]" />
      <div className="absolute left-[430px] top-[508px] w-[746px] h-[218px] border-[3px] border-[#fb4046]" />
      <svg className="absolute inset-0 w-[1448px] h-[885px] pointer-events-none" viewBox="0 0 1448 885">
        <path d="M119 72L131 84 127 86 139 156 136 157 121 88 115 90z" fill="#f4353a" />
        <path d="M285 75L288 91 282 89 259 136 258 135 272 87 266 86z" fill="#f4353a" />
      </svg>
    </div>
  );
}
